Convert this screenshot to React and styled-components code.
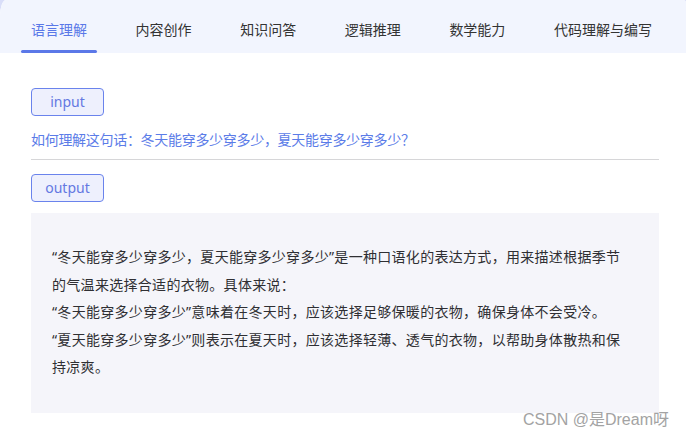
import React, { useState } from "react";
import styled, { createGlobalStyle } from "styled-components";

// GLOBAL
const GlobalStyle = createGlobalStyle`
  html, body {
    margin: 0;
    padding: 0;
    background: #d9def9;
  }
  body {
    font-family: "Noto Sans", "Noto Sans CJK SC", sans-serif;
    color: #333;
  }
  * {
    box-sizing: border-box;
  }
`;

// STYLES
const Page = styled.div`
  position: relative;
  width: 686px;
  height: 441px;
  background: #ffffff;
  border-top-left-radius: 6px 16px;
  border-top-right-radius: 3px;
  overflow: hidden;
`;

const TabBar = styled.nav`
  display: flex;
  align-items: stretch;
  gap: 28.6px;
  height: 53px;
  padding-left: 21px;
  background: #f2f5fe;
`;

const Tab = styled.button`
  position: relative;
  display: flex;
  align-items: center;
  padding: 4px 10px 0;
  border: none;
  background: transparent;
  font-family: "Noto Sans CJK SC", sans-serif;
  font-size: 14px;
  line-height: 20px;
  color: ${({ $active }) => ($active ? "#5a78e8" : "#333333")};
  cursor: pointer;
  &::after {
    content: "";
    position: absolute;
    left: 0;
    right: 0;
    bottom: 0;
    height: 3px;
    border-radius: 2px;
    background: ${({ $active }) => ($active ? "#5b78e8" : "transparent")};
  }
`;

const Content = styled.section`
  display: flex;
  flex-direction: column;
  align-items: flex-start;
  padding: 35px 27px 0 31px;
`;

const Label = styled.div`
  display: flex;
  align-items: center;
  justify-content: center;
  width: 73px;
  height: 28px;
  border: 1px solid #6a83ec;
  border-radius: 4px;
  background: #eef0fd;
  color: #6478e2;
  font-size: 14px;
  line-height: 20px;
  padding-bottom: 1px;
`;

const Question = styled.p`
  margin: 13px 0 0;
  font-family: "Noto Sans CJK SC", sans-serif;
  font-size: 14px;
  letter-spacing: -0.3px;
  line-height: 20px;
  color: #5b7ce8;
`;

const Divider = styled.hr`
  align-self: stretch;
  margin: 10px 0 14px;
  border: none;
  border-top: 1px solid #d6d6d8;
`;

const AnswerBox = styled.div`
  align-self: stretch;
  margin-top: 11px;
  height: 200px;
  padding: 30px 28px 0 21px;
  background: #f5f5fa;
  font-family: "Noto Sans", "Noto Sans CJK SC", sans-serif;
  font-size: 14px;
  letter-spacing: 0.3px;
  line-height: 27.5px;
  color: #2f2f33;
  p {
    margin: 0;
  }
`;

const Watermark = styled.span`
  position: absolute;
  right: 17px;
  top: 410px;
  font-family: "Liberation Sans", "Noto Sans CJK SC", sans-serif;
  font-size: 16px;
  line-height: 19px;
  color: #a3a3a3;
`;

const tabs = [
  "语言理解",
  "内容创作",
  "知识问答",
  "逻辑推理",
  "数学能力",
  "代码理解与编写",
];

const answer = [
  "“冬天能穿多少穿多少，夏天能穿多少穿多少”是一种口语化的表达方式，用来描述根据季节的气温来选择合适的衣物。具体来说：",
  "“冬天能穿多少穿多少”意味着在冬天时，应该选择足够保暖的衣物，确保身体不会受冷。",
  "“夏天能穿多少穿多少”则表示在夏天时，应该选择轻薄、透气的衣物，以帮助身体散热和保持凉爽。",
];

const App = () => {
  const [current, setCurrent] = useState(0);

  return (
    <>
      <GlobalStyle />
      <Page>
        <TabBar>
          {tabs.map((t, i) => (
            <Tab key={t} $active={i === current} onClick={() => setCurrent(i)}>
              {t}
            </Tab>
          ))}
        </TabBar>
        <Content>
          <Label>input</Label>
          <Question>
            如何理解这句话：冬天能穿多少穿多少，夏天能穿多少穿多少？
          </Question>
          <Divider />
          <Label>output</Label>
          <AnswerBox>
            {answer.map((line) => (
              <p key={line}>{line}</p>
            ))}
          </AnswerBox>
        </Content>
        <Watermark>CSDN @是Dream呀</Watermark>
      </Page>
    </>
  );
};

export default App;
